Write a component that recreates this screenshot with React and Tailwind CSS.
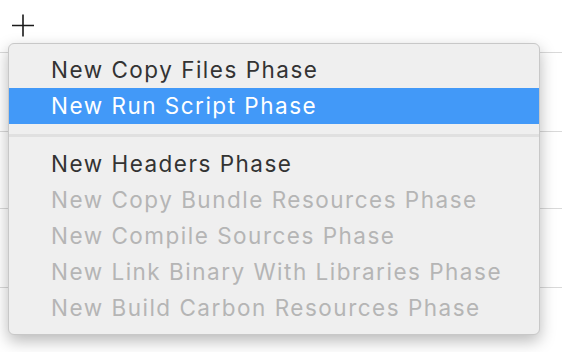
import React from "react";

const items = [
  { label: "New Copy Files Phase", enabled: true },
  { label: "New Run Script Phase", enabled: true, active: true },
  { sep: true },
  { label: "New Headers Phase", enabled: true },
  { label: "New Copy Bundle Resources Phase" },
  { label: "New Compile Sources Phase" },
  { label: "New Link Binary With Libraries Phase" },
  { label: "New Build Carbon Resources Phase" },
];

const PlusIcon = () => (
  <svg width="24" height="24" viewBox="0 0 24 24" className="block">
    <path d="M12 1.5V23.5M1 12.5H23" stroke="#1a1a1a" strokeWidth="1.6" fill="none" />
  </svg>
);

export default function App() {
  return (
    <div
      className="relative w-[562px] h-[352px] bg-white overflow-hidden"
      style={{ fontFamily: 'Inter, "Liberation Sans", Arial, sans-serif' }}
    >
      {/* toolbar with plus button */}
      <div className="h-[52px] pl-[11px] pt-[13px]">
        <PlusIcon />
      </div>
      {/* list rows behind the menu */}
      <div className="border-t border-[#d9d9d9] h-[79px]" />
      <div className="border-t border-[#d9d9d9] h-[77px]" />
      <div className="border-t border-[#d9d9d9] h-[79px]" />
      <div className="border-t border-[#d9d9d9] h-[70px]" />

      {/* popup menu */}
      <div className="absolute left-[8px] top-[43px] w-[532px] rounded-[6px] bg-[#efefef] border border-[#c8c8c8] shadow-[0_6px_16px_rgba(0,0,0,0.28)] py-[8px]">
        {items.map((it, i) =>
          it.sep ? (
            <div key={i} className="h-[22px] flex items-center">
              <div className="w-full h-[3px] bg-[#e0e0e0]" />
            </div>
          ) : (
            <div
              key={i}
              className={
                "h-[36px] flex items-center pl-[42px] text-[22.5px] leading-none tracking-[1.5px] " +
                (it.active
                  ? "bg-[#4299f8] text-white"
                  : it.enabled
                  ? "text-[#333333]"
                  : "text-[#b5b5b5]")
              }
            >
              {it.label}
            </div>
          )
        )}
      </div>
    </div>
  );
}
